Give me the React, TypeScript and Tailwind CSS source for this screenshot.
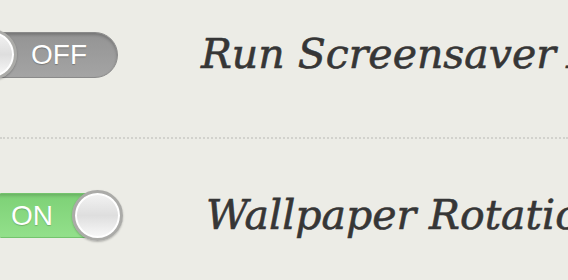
import type React from 'react'

interface ToggleProps {
  on: boolean
}

const Knob: React.FC<{ className: string }> = ({ className }) => (
  <div
    className={`absolute w-[51px] h-[51px] rounded-full border-[3px] border-[#ababa8] bg-gradient-to-b from-[#f4f4f4] via-[#dedede] to-[#fafafa] shadow-[0_1px_2px_rgba(0,0,0,0.25),inset_0_0_0_2px_#ffffff] ${className}`}
  ></div>
)

const Toggle: React.FC<ToggleProps> = ({ on }) => {
  if (on) {
    return (
      <div className="relative w-[145px] h-[45px] ml-[-22px] shrink-0">
        <div className="h-full w-[122px] rounded-l-full bg-gradient-to-b from-[#7dd176] to-[#93e08b] border border-[#74c46d] shadow-[inset_0_2px_3px_rgba(0,0,0,0.15)] flex items-center pl-[32px]">
          <span className="text-white text-[28px] leading-none font-['Liberation_Sans',Arial,sans-serif] [text-shadow:0_1px_1px_rgba(0,0,0,0.2)]">
            ON
          </span>
        </div>
        <Knob className="left-[94px] top-[-3px]" />
      </div>
    )
  }
  return (
    <div className="relative w-[140px] h-[46px] ml-[-22px] shrink-0">
      <div className="h-full w-full rounded-full bg-gradient-to-b from-[#949494] to-[#a4a4a4] border border-[#8a8a8a] shadow-[inset_0_2px_3px_rgba(0,0,0,0.2)] flex items-center pl-[52px]">
        <span className="text-white text-[28px] leading-none font-['Liberation_Sans',Arial,sans-serif] [text-shadow:0_1px_1px_rgba(0,0,0,0.25)]">
          OFF
        </span>
      </div>
      <Knob className="left-[-12px] top-[-3px]" />
    </div>
  )
}

interface SettingRowProps {
  on: boolean
  label: string
  className?: string
}

const SettingRow: React.FC<SettingRowProps> = ({ on, label, className = "" }) => {
  return (
    <div className={`flex items-center overflow-hidden ${className}`}>
      <Toggle on={on} />
      <span className="ml-[83px] whitespace-nowrap italic text-[41px] leading-none text-[#363636] [-webkit-text-stroke:0.6px_#363636] font-['DejaVu_Serif',Georgia,serif]">
        {label}
      </span>
    </div>
  )
}

export default function App() {
  return (
    <div className="w-[568px] h-[280px] bg-[#ecece6] overflow-hidden flex flex-col">
      <SettingRow on={false} label="Run Screensaver After" className="h-[139px] shrink-0 pb-[28px] border-b-2 border-dotted border-[#d2d2cd]" />
      <SettingRow on={true} label="Wallpaper Rotation" className="flex-1 pt-[12px]" />
    </div>
  )
}
